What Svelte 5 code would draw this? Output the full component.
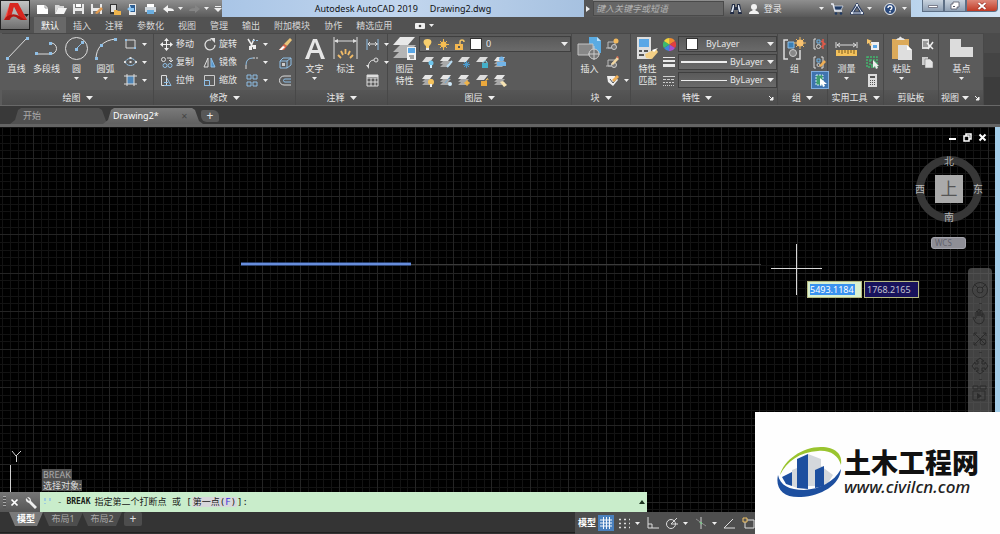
<script lang="ts">
  interface Tool {
    icon: string;
    label: string;
    caret?: boolean;
    on?: boolean;
  }

  type IconDef = [width: number, height: number, body: string];

  const BLUE = '#8fbfe6';

  // shared shapes: one sheet and a stack of sheets, used by all the layer tools
  const sheet = '<path d="M1 6 5 1h8L9 6z" fill="#dcdcdc"/>';
  const stack =
    '<path d="M1 11 4 8h8l-3 3zM1 8 4 5h8L9 8z" fill="#a9a9a9"/><path d="M1 5 4 1h8L9 5z" fill="#e6e6e6"/>';

  const icons: Record<string, IconDef> = {
    logo: [29, 29, '<path d="M3 19 9 2h3L8 19z" fill="#f0584c"/><path d="M9 2h8l9 17h-6L13 6 9 19H5z" fill="#d8261f"/><path d="M13 6l4 8h-6z" fill="#b5b5b5"/><path d="M5 16q7-5 13-1 4 3 8 4h-6q-3-1-5-3-4-2-7 3H3z" fill="#b01712"/><path d="M23 13h5l-2.500 3z" fill="#222"/>'],
    newFile: [13, 12, '<path d="M1 2h8l3 3v6H1z" fill="#fff"/><path d="M9 2v3h3" fill="none" stroke="#999"/>'],
    open: [13, 12, '<path d="M1 11V2h4l1 1h4v2H4z" fill="#d8d8d8"/><path d="M4 5h9l-3 6H1z" fill="#f5f5f5"/>'],
    save: [13, 12, '<path d="M1 1h11v10H1z" fill="#e8e8e8"/><path d="M3 1h7v4H3zM3 8h7v3H3z" fill="#777"/><path d="M4 1h5v3H4z" fill="#fff"/>'],
    saveAs: [13, 12, '<path d="M1 1h11v10H1z" fill="#e8e8e8"/><path d="M3 1h7v4H3zM3 8h7v3H3z" fill="#777"/><path d="m5 10 6-6 2 2-6 5z" fill="#e0994f"/>'],
    webOpen: [13, 12, '<path d="M2 1h7v10H2z" fill="#333"/><path d="M3 2h5v7H3z" fill="#ddd"/><path d="M6 7h3l1 1h3v4H6z" fill="#eeb44c"/>'],
    webSave: [13, 12, '<path d="M3 1h7v11H3z" fill="#e8e8e8"/><path d="M4 2h5v7H4z" fill="#2e5f94"/><path d="m1 6 4-3v2h3v3H5v1z" fill="#8cc7f5"/>'],
    plot: [13, 12, '<path d="M3 1h7v4H3z" fill="#fff"/><path d="M1 4h11v5H1z" fill="#cfd6dc"/><path d="M3 7h7v4H3z" fill="#6aaee0"/>'],
    undo: [13, 12, '<path d="m1 6 5-4v3c4 0 6 1 6 3H6v2z" fill="#f2f2f2"/>'],
    redo: [13, 12, '<path d="M12 6 7 2v3C3 5 1 6 1 8h6v2z" fill="#858585"/>'],
    caret: [7, 4, '<path d="M0 0h7L3.500 4z" fill="#eee"/>'],
    dot: [5, 3, '<path d="M0 0h5L2.500 3z" fill="#eee"/>'],
    customize: [8, 8, '<path d="M1 1h6v1H1zM0 3h8L4 7z" fill="#eee"/>'],
    next: [5, 8, '<path d="M0 1v6l4-3z" fill="#eee"/>'],
    find: [12, 12, '<path d="M2 1h3v3h2V1h3l2 10H8V7H4v4H0z" fill="#222c44"/><path d="M3 2h1v3L3 9H1zM8 2h1l2 7H9L8 5z" fill="#dce4f0"/>'],
    user: [12, 12, '<circle cx="6" cy="4" r="3" fill="#f2f2f2"/><path d="M1 11c0-3 3-3 4-4h2c1 1 4 1 4 4z" fill="#f2f2f2"/>'],
    cart: [14, 12, '<path d="M1 1h2l2 7h7" fill="none" stroke="#e8edf6" stroke-width="1.500"/><path d="M4 3h9l-2 4H5z" fill="#1f3a63" stroke="#dfe7f2" stroke-width=".7"/><circle cx="6" cy="10.500" r="1.300" fill="#1f3a63"/><circle cx="11" cy="10.500" r="1.300" fill="#1f3a63"/>'],
    a360: [14, 12, '<path d="m7 2 5 8H2z" fill="none" stroke="#2b3d63" stroke-width="3"/><path d="m7 2 5 8H2z" fill="none" stroke="#dfe7f2"/><path d="M6 1h2v2H6zM1 9h2v2H1zM11 9h2v2h-2z" fill="#dfe7f2"/>'],
    help: [12, 12, '<circle cx="6" cy="6" r="5.500" fill="#2b4a7d" stroke="#eee"/><path d="M4 5q0-2 2-2t2 1.500Q8 6 6 7" fill="none" stroke="#fff" stroke-width="1.300"/><path d="M5.300 8h1.400v1.400H5.300z" fill="#fff"/>'],
    winMin: [12, 8, '<path d="M1.500 3.500h9v2h-9z" fill="#fff" stroke="#556" stroke-width=".7"/>'],
    winMax: [12, 10, '<path d="M4 1h6v5H8v2H2V3h2z" fill="#fff" stroke="#556" stroke-width=".8"/><path d="M4 5h2v1H4z" fill="#556"/>'],
    winClose: [10, 8, '<path d="m1.500 1 7 6m0-6-7 6" stroke="#8a2016" stroke-width="3"/><path d="m1.500 1 7 6m0-6-7 6" stroke="#fff" stroke-width="2"/>'],
    ribbonMin: [10, 6, '<rect width="10" height="6" rx="1" fill="#f0f0f0"/><circle cx="5" cy="3" r="1.300" fill="#444"/>'],
    line: [24, 25, `<path d="M2 23 22 2" stroke="#ddd"/><path d="M1 21h3v3H1zM21 1h3v3h-3z" fill="${BLUE}"/>`],
    polyline: [26, 25, `<path d="M2 18h15a5.500 5.500 0 0 0 0-11" fill="none" stroke="#ddd"/><path d="M1 16h3v3H1zM15 16h3v3h-3zM15 6h3v3h-3z" fill="${BLUE}"/>`],
    circle: [25, 25, `<circle cx="12.500" cy="12.500" r="11" fill="none" stroke="#ddd"/><path d="m12 13 6-6" stroke="${BLUE}"/><path d="M11 12h3v3h-3zM17 5h3v3h-3z" fill="${BLUE}"/>`],
    arc: [24, 25, `<path d="M2 23C2 12 9 4 22 3" fill="none" stroke="#ddd"/><path d="M1 21h3v3H1zM6 8h3v3H6zM20 2h3v3h-3z" fill="${BLUE}"/>`],
    rect: [14, 12, `<path d="M2 2h9v8H2z" fill="none" stroke="#ddd"/><path d="M1 1h2v2H1zM10 9h2v2h-2z" fill="${BLUE}"/>`],
    ellipse: [14, 12, `<ellipse cx="6.500" cy="6" rx="5" ry="3.500" fill="none" stroke="${BLUE}"/><path d="M5.500 5h2v2h-2zM5.500 1h2v2h-2zM0 5h2v2H0zM11 5h2v2h-2z" fill="#ddd"/>`],
    hatch: [14, 12, `<path d="M3 2h7v8H3z" fill="#4f86b8"/><path d="M3 0v12M10 0v12M0 2h13M0 10h13" stroke="#ddd"/>`],
    move: [13, 13, '<path d="M6.500 0 9 3H7v3h3V4l3 2.500L10 9V7H7v3h2l-2.500 3L4 10h2V7H3v2L0 6.500 3 4v2h3V3H4z" fill="#f0f0f0"/>'],
    copy: [13, 13, `<circle cx="3.500" cy="3.500" r="2" fill="none" stroke="#ddd"/><path d="M7 2h4v3m-2-1 2 2 2-2" fill="none" stroke="#ddd"/><circle cx="5" cy="9.500" r="2" fill="none" stroke="${BLUE}"/><circle cx="10" cy="9.500" r="2" fill="none" stroke="${BLUE}"/>`],
    stretch: [13, 13, `<path d="M1.500 1.500h5v10h-5z" fill="none" stroke="#ddd"/><path d="M6.500 3.500 11 11.500H4M4 8.500h4" fill="none" stroke="${BLUE}"/>`],
    rotate: [13, 13, '<path d="M8 2a5 5 0 1 0 4 5" fill="none" stroke="#ddd" stroke-width="1.300"/><path d="M7 0h5v5z" fill="#ddd"/>'],
    mirror: [13, 13, '<path d="M5 2v9H1z" fill="none" stroke="#ddd"/><path d="M8 2v9h4z" fill="#5292c7" stroke="#8fbfe6"/>'],
    scale: [13, 13, `<path d="M1.500 1.500h10v10h-10z" fill="none" stroke="#ccc"/><path d="M1.500 6.500h5v5h-5z" fill="#5b5b5b" stroke="${BLUE}"/>`],
    trim: [14, 13, '<path d="m3 1 5 8M9 1 6 8" stroke="#eee" stroke-width="1.500"/><path d="M4 8h3v4H4zM8 7h3v4H8z" fill="#eee"/><path d="M8 2.500h5" stroke="#8fbfe6" stroke-dasharray="2 1"/>'],
    fillet: [14, 13, `<path d="M1 13V9" stroke="#ddd"/><path d="M1 9Q1 2 8 2" fill="none" stroke="${BLUE}"/><path d="M8 2h5" stroke="#ddd" stroke-dasharray="2 1"/>`],
    array: [14, 13, `<path d="M2 1h4v4H2zM8 1h4v4H8zM2 8h4v4H2zM8 8h4v4H8z" fill="none" stroke="${BLUE}"/>`],
    erase: [14, 13, '<path d="m12 0 2 2-5 6-3-2z" fill="#e9c478"/><path d="m6 6 3 2-3 4H1z" fill="#e26a4b"/><path d="m5 8 2 1-3 3H1z" fill="#fff"/>'],
    explode: [14, 13, `<path d="M2 5h7v7H2zM2 5l3-3h8v7l-4 3M9 5l4-3" fill="none" stroke="${BLUE}"/><path d="M4 7h3v3H4z" fill="#ccc"/>`],
    offset: [14, 13, `<path d="M13 2H6a4.500 4.500 0 0 0 0 9h7" fill="none" stroke="#ddd"/><path d="M13 5H7a1.500 1.500 0 0 0 0 3h6" fill="none" stroke="${BLUE}"/>`],
    text: [22, 25, '<path d="M1 23 9 3h4l8 20h-4l-2-6H7l-2 6zM8 14h6l-3-8z" fill="#e6e6e6"/>'],
    dim: [25, 25, '<path d="M1 1v22M24 1v22M2 5h21" stroke="#ddd"/><path d="M1 5l4-2v4zM24 5l-4-2v4z" fill="#ddd"/><path d="M12.500 13v5M8 15l2 4M17 15l-2 4M5 19l3 3M20 19l-3 3" stroke="#f0bb68" stroke-width="1.800"/>'],
    linear: [14, 13, `<path d="M1 1v11M12 1v11" stroke="${BLUE}"/><path d="M2 6h10M4 4 2 6l2 2M9 4l2 2-2 2" fill="none" stroke="#ddd"/>`],
    leader: [14, 13, '<path d="M2 11q1-7 6-7" fill="none" stroke="#ddd"/><circle cx="10" cy="4" r="2" fill="none" stroke="#ddd"/><path d="M0 9h3v4z" fill="#ddd"/>'],
    table: [14, 13, '<path d="M1 1h11v11H1zM1 4h11M1 8h11M5 4v8M9 4v8" fill="none" stroke="#ddd"/><path d="M1 1h11v2H1z" fill="#ddd"/>'],
    layers: [25, 25, '<path d="M1 22 8 15h16l-7 7zM1 16 8 9h16l-7 7z" fill="#b5b5b5"/><path d="M1 9 8 1h15l-7 8z" fill="#e8e8e8"/><path d="M15 11h9v13h-9z" fill="#f2f2f2"/><path d="M16 12h7v5h-7z" fill="#5aa7e6"/><path d="M17 20h5M18 22h4" stroke="#555"/>'],
    bulb: [11, 13, '<path d="M5.500 1C0 1 1 6 4 8v2h3V8c3-2 4-7-1.500-7z" fill="#f9cf6d"/><path d="M4 10h3v2H4z" fill="#eee"/>'],
    sun: [11, 13, '<path d="M5.500 1v11M0 6.500h11M2 3l7 7M9 3l-7 7" stroke="#f0b950"/><circle cx="5.500" cy="6.500" r="3" fill="#f5bd51"/>'],
    unlock: [12, 13, '<path d="M6 6V4q0-2 2-2t2 2" fill="none" stroke="#f0c264" stroke-width="1.500"/><path d="M1 6h8v6H1z" fill="#f3b750"/><path d="M4 8h2v2H4z" fill="#555"/>'],
    layOff: [14, 13, sheet + '<circle cx="10" cy="7" r="2.500" fill="#6ec5ec"/><path d="M9 9h2v3H9z" fill="#cfeefe"/>'],
    layIso: [14, 13, stack + '<path d="m8 11 5-6" stroke="#b8dbf1" stroke-width="2"/>'],
    layFrz: [14, 13, sheet + '<circle cx="9.500" cy="8.500" r="2" fill="#4a9bce"/><path d="M9.500 5v7M6 8.500h7M7 6l5 5M12 6l-5 5" stroke="#4a9bce"/>'],
    layLck: [14, 13, sheet + '<path d="M8 7V6q2-3 4 0v1" fill="none" stroke="#91d6e6"/><path d="M7 7h6v5H7z" fill="#43b0c9"/>'],
    layCur: [14, 13, stack + '<path d="M4 6h9v4H4z" fill="#72b4e8"/><circle cx="8.500" cy="3" r="2.500" fill="#72b4e8"/>'],
    layOn: [14, 13, stack + '<circle cx="10" cy="8" r="3" fill="#f5c25c"/><path d="M9 10h2v3H9z" fill="#eee"/>'],
    layUniso: [14, 13, stack + '<path d="m6 9 5-6" stroke="#76a9cf"/><circle cx="11" cy="10" r="2" fill="#cfe9fa"/>'],
    layThw: [14, 13, stack + '<circle cx="10" cy="9" r="2" fill="#f3b548"/><path d="M10 6v6M7 9h6" stroke="#f3b548"/>'],
    layUlk: [14, 13, sheet + '<path d="M11 7V6q2-3 2 0" fill="none" stroke="#f4c35f"/><path d="M6 7h6v5H6z" fill="#eba83c"/>'],
    layMch: [14, 13, stack + '<path d="m7 8 3-1 4 4-3 2z" fill="#f6e4b4"/>'],
    insert: [25, 25, '<path d="M12 1h8l4 4v12H12z" fill="#5aabe2"/><path d="M20 1v4h4" fill="#b8e0fb"/><path d="M1 8h15v11H1z" fill="#888" stroke="#c4c4c4"/><circle cx="17" cy="18" r="5" fill="#777" stroke="#ccc"/><path d="M17 10v14M11 18h12" stroke="#ccc"/>'],
    blkNew: [14, 13, '<path d="M2 4h7v6H2zM0 10h5" fill="none" stroke="#bbb"/><circle cx="8" cy="9" r="2.500" fill="#777" stroke="#ccc"/><circle cx="10" cy="3" r="2.500" fill="#f2b95d"/>'],
    blkEdit: [14, 13, '<path d="M2 4h7v6H2zM0 10h5" fill="none" stroke="#bbb"/><circle cx="8" cy="9" r="2.500" fill="#777" stroke="#ccc"/><path d="m5 8 6-7 2 2-6 6z" fill="#f0d6a2"/><path d="m10 1 2-1 1 3z" fill="#e27055"/>'],
    blkAttr: [14, 13, '<path d="M1 2h8l3 4-5 6-5-4z" fill="#eee"/><path d="m4 5 3 4 4-5" fill="none" stroke="#555"/><path d="m6 6 5-5 2 2-5 5z" fill="#efae54"/>'],
    match: [23, 25, '<path d="M1 1h14v22H1z" fill="#dedede"/><path d="M3 3h10v8H3z" fill="#5aa7e6"/><path d="M3 14h3v2H3zM8 14h4v2H8zM3 18h5v2H3z" fill="#555"/><path d="m20 13 2 3-6 7-6-1-1-4z" fill="#f3cf84"/><path d="m22 12-4 4-2-2 3-1z" fill="#fff"/>'],
    wheel: [13, 13, '<path d="M6.500 6.500V0A6.500 6.500 0 0 1 12 3z" fill="#f28a2e"/><path d="M6.500 6.500 12 3a6.500 6.500 0 0 1 0 7z" fill="#e33f3f"/><path d="m6.500 6.500 5.500 3.500a6.500 6.500 0 0 1-6 3z" fill="#a64fd0"/><path d="M6.500 6.500 6 13a6.500 6.500 0 0 1-5-3z" fill="#3e86dd"/><path d="M6.500 6.500 1 10a6.500 6.500 0 0 1 0-7z" fill="#3bb96d"/><path d="M6.500 6.500 1 3a6.500 6.500 0 0 1 5.500-3z" fill="#f4d43c"/>'],
    weights: [13, 13, '<path d="M0 1h12v1H0zM0 4h12v2H0zM0 8h12v3H0z" fill="#e8e8e8"/>'],
    types: [13, 13, '<path d="M0 2.500h12" stroke="#ccc"/><path d="M0 5.500h12" stroke="#ccc" stroke-dasharray="3 1"/><path d="M0 8.500h12" stroke="#ccc" stroke-dasharray="2 1"/><path d="M0 11.500h12" stroke="#ccc" stroke-dasharray="1 1"/>'],
    group: [23, 25, '<path d="M5 4H1v19h4M13 23h4V14" fill="none" stroke="#ddd" stroke-width="1.500"/><path d="M5 6h6v6H5z" fill="#3b7fb5" stroke="#8fbfe6"/><circle cx="10" cy="17" r="3.500" fill="#888" stroke="#ccc"/><path d="M17 1v12M11 7h12M13 3l8 8M21 3l-8 8" stroke="#f2b95d"/><circle cx="17" cy="7" r="3.500" fill="#f8c270"/>'],
    ungroup: [14, 13, '<path d="M3 1H1v10h2" fill="none" stroke="#ddd"/><path d="M4 2h3v3H4z" fill="none" stroke="#6db2e6"/><circle cx="5.500" cy="8.500" r="2" fill="none" stroke="#ccc"/><path d="m8 3 4 3-4 3M10 1v10" fill="none" stroke="#e05a4a" stroke-width="1.500"/>'],
    grpEdit: [14, 13, '<path d="M3 1H1v11h2M8 1h2v11H8" fill="none" stroke="#ddd"/><path d="M4 3h3v3H4z" fill="none" stroke="#6db2e6"/><circle cx="5.500" cy="9" r="1.500" fill="none" stroke="#ccc"/><path d="m6 10 5-6 2 2-5 5z" fill="#efae54"/>'],
    grpSel: [14, 13, '<path d="M3 1h7v10H3z" fill="#3f9d70" stroke="#cfe3f5" stroke-dasharray="2 1"/><path d="M7 4v8l2-2 1 3 2-1-1-2h3z" fill="#fff"/>'],
    measure: [23, 25, '<path d="M1 6v6M22 6v6M2 9h19M5 7 2 9l3 2M18 7l3 2-3 2" fill="none" stroke="#ddd"/><path d="M1 14h21v6H1z" fill="#f3c15b"/><path d="M4 14v3M7 14v4M10 14v3M13 14v4M16 14v3M19 14v4" stroke="#7b5a1c"/>'],
    quick: [14, 13, '<path d="M5 4h8v8H5z" fill="#eee"/><path d="M7 7h4v3H7z" fill="#5aa7e6"/><path d="m1 1 5 2-2 1 2 3-2 1-1-3-2 1z" fill="#f7c56b"/>'],
    selAll: [14, 13, '<path d="M1 1h10v10H1zM4 4h5v5H4z" fill="none" stroke="#43b86f" stroke-dasharray="2 1" stroke-width="1.500"/><path d="M7 4v8l2-2 1 3 2-1-1-2h2z" fill="#eee"/>'],
    calc: [14, 13, '<path d="M2 0h9v13H2z" fill="#ddd"/><path d="M4 2h5v2H4z" fill="#555"/><path d="M4 6.500h6M4 8.500h6M4 10.500h6" stroke="#555" stroke-dasharray="1 1"/>'],
    paste: [22, 25, '<path d="M1 3h17v20H1z" fill="#dcaa5a"/><path d="M5 4q1-2 3-2 1-3 3 0 2 0 3 2z" fill="#e8e8e8"/><path d="M7 9h9l5 5v10H7z" fill="#dedede"/><path d="M16 9v5h5z" fill="#fff"/>'],
    cut: [14, 13, '<path d="M1 1h7v10H1z" fill="#ddd"/><path d="M2 4h5M2 6h5M2 8h5" stroke="#555"/><path d="m6 5 6 6M12 4l-5 7" stroke="#eee" stroke-width="1.500"/>'],
    copyClip: [14, 13, '<path d="M1 1h6v8H1z" fill="#ccc"/><path d="M4 3h5l3 3v6H4z" fill="#e4e4e4" stroke="#666" stroke-width=".5"/>'],
    base: [25, 25, '<path d="M1 3h11v8h12v10H1z" fill="#dcdcdc"/>'],
    launch: [6, 6, '<path d="M1 1l3 3M5 2v3H2z" fill="#eee" stroke="#eee"/>'],
    vpMin: [9, 9, '<path d="M1 5h7v2H1z" fill="#fff"/>'],
    vpMax: [9, 9, '<path d="M1 3h5v5H1zM3 3V1h5v5H6" fill="none" stroke="#fff" stroke-width="1.500"/>'],
    vpClose: [9, 9, '<path d="m1.500 1.500 6 6m0-6-6 6" stroke="#fff" stroke-width="2"/>'],
    wrench: [13, 13, '<path d="M2 1 5 4 4 5 1 2q-1 4 3 5l6 6 2-2-6-6q0-4-4-4z" fill="#eee"/>'],
    cross: [9, 9, '<path d="m1.500 1.500 6 6m0-6-6 6" stroke="#fff" stroke-width="1.700"/>'],
    up: [6, 4, '<path d="M0 4h6L3 0z" fill="#1c331f"/>'],
    grid: [14, 14, '<path d="M4.500 1v12M7.500 1v12M10.500 1v12M1 4h12M1 7h12M1 10h12" stroke="#f2f6fb"/>'],
    snap: [12, 12, '<path d="M1 2.500h11M1 6.500h11M1 10.500h11" stroke="#ddd" stroke-width="1.500" stroke-dasharray="2 3"/>'],
    ortho: [13, 14, '<path d="M2 1v11h11M2 8h4v4" fill="none" stroke="#ddd"/>'],
    polar: [13, 14, '<circle cx="6" cy="8" r="4.500" fill="none" stroke="#ddd"/><path d="m6 8 6-6M6 8h7" stroke="#ddd"/>'],
    iso: [13, 14, '<path d="m2 3 10 7" stroke="#8d8d8d"/><path d="M7 1v12" stroke="#cfcfcf"/><path d="M5 6h3v3z" fill="#7fc18b"/>'],
    track: [13, 14, '<path d="m1 12 9-9M1 12h11" stroke="#ddd" fill="none"/>'],
    osnap: [13, 14, '<path d="M3 4h9v8H3z" fill="none" stroke="#ddd"/><path d="M1 2h4v4H1z" fill="#555" stroke="#f0c264"/>'],
    navWheel: [18, 18, '<circle cx="9" cy="9" r="7.500" fill="none" stroke="#2b2b2b"/><circle cx="9" cy="9" r="3" fill="none" stroke="#2b2b2b"/><path d="M3 3l4 4M15 3l-4 4" stroke="#2b2b2b"/>'],
    navPan: [18, 18, '<path d="M5 10V4q1-2 2 0v4-6q1-2 2 0v6-5q1-2 2 0v6-3q2-1 2 1v5q-1 4-5 4t-6-6q0-2 3 1" fill="none" stroke="#2b2b2b"/>'],
    navZoom: [18, 18, '<path d="m3 3 11 11M15 3 3 15M3 6V3h3M12 3h3v3M3 12v3h3" fill="none" stroke="#2b2b2b"/><circle cx="12" cy="12" r="3" fill="none" stroke="#2b2b2b"/>'],
    navOrbit: [18, 18, '<path d="M7 7V4H5l4-3 4 3h-2v3h3V5l3 4-3 4v-2h-3v3h2l-4 3-4-3h2v-3H4v2L1 9l3-4v2z" fill="none" stroke="#2b2b2b"/>'],
    navMotion: [18, 18, '<path d="M2 2h5v3H2zM9 2h6v3H9zM2 7h12v9H2z" fill="none" stroke="#2b2b2b"/><path d="m6 9 5 3-5 3z" fill="#2b2b2b"/>'],
    spark: [10, 10, '<path d="M2 1v3M7 1v3M2 6v1" stroke="#8fc2e6" stroke-width="1.500"/>'],
    civil: [68, 54, '<path d="M4 29C8 14 26 1 45 1c14 0 22 7 20 18C62 9 54 4 42 5 24 6 11 15 4 29z" fill="#9ac42f"/><path d="m32 8 13 5v27H32z" fill="#d4d8dc"/><path d="m45 20 12 9-5 8-7 3z" fill="#d4d8dc"/><path d="m16 24 5-2v20l-5-2z" fill="#d4d8dc"/><path d="m21 13 11-5v35l-11-1z" fill="#1d4f9f"/><path d="m39 24 9-4v20l-9 2z" fill="#1d4f9f"/><path d="m6 31 10-5v14l-6-2z" fill="#1d4f9f"/><path d="M2 29C-1 42 7 52 25 51 45 50 64 39 65 23 58 36 44 43 28 44 13 44 4 39 2 29z" fill="#1d4f9f"/>'],
  };

  const quickAccess: Tool[] = [
    { icon: 'newFile', label: '新建' },
    { icon: 'open', label: '打开' },
    { icon: 'save', label: '保存' },
    { icon: 'saveAs', label: '另存为' },
    { icon: 'webOpen', label: '从 Web 打开' },
    { icon: 'webSave', label: '保存到 Web' },
    { icon: 'plot', label: '打印' },
    { icon: 'undo', label: '放弃', caret: true },
    { icon: 'redo', label: '重做', caret: true },
  ];

  const menus = ['默认', '插入', '注释', '参数化', '视图', '管理', '输出', '附加模块', '协作', '精选应用'];
  let activeMenu = $state('默认');

  const draw: Tool[] = [
    { icon: 'line', label: '直线' },
    { icon: 'polyline', label: '多段线' },
    { icon: 'circle', label: '圆', caret: true },
    { icon: 'arc', label: '圆弧', caret: true },
  ];
  const drawSmall: Tool[] = [
    { icon: 'rect', label: '矩形', caret: true },
    { icon: 'ellipse', label: '椭圆', caret: true },
    { icon: 'hatch', label: '图案填充', caret: true },
  ];
  const modify: Tool[] = [
    { icon: 'move', label: '移动' },
    { icon: 'copy', label: '复制' },
    { icon: 'stretch', label: '拉伸' },
    { icon: 'rotate', label: '旋转' },
    { icon: 'mirror', label: '镜像' },
    { icon: 'scale', label: '缩放' },
  ];
  const modifySmall: Tool[] = [
    { icon: 'trim', label: '修剪', caret: true },
    { icon: 'fillet', label: '圆角', caret: true },
    { icon: 'array', label: '阵列', caret: true },
  ];
  const modifyMore: Tool[] = [
    { icon: 'erase', label: '删除' },
    { icon: 'explode', label: '分解' },
    { icon: 'offset', label: '偏移' },
  ];
  const annotateSmall: Tool[] = [
    { icon: 'linear', label: '线性', caret: true },
    { icon: 'leader', label: '引线', caret: true },
    { icon: 'table', label: '表格' },
  ];
  const layerTools: Tool[] = [
    { icon: 'layOff', label: '关' },
    { icon: 'layIso', label: '隔离' },
    { icon: 'layFrz', label: '冻结' },
    { icon: 'layLck', label: '锁定' },
    { icon: 'layCur', label: '置为当前' },
    { icon: 'layOn', label: '打开所有图层' },
    { icon: 'layUniso', label: '取消隔离' },
    { icon: 'layThw', label: '解冻所有图层' },
    { icon: 'layUlk', label: '解锁' },
    { icon: 'layMch', label: '匹配图层' },
  ];
  const blockSmall: Tool[] = [
    { icon: 'blkNew', label: '创建' },
    { icon: 'blkEdit', label: '编辑' },
    { icon: 'blkAttr', label: '编辑属性', caret: true },
  ];
  const groupSmall: Tool[] = [
    { icon: 'ungroup', label: '解除编组' },
    { icon: 'grpEdit', label: '组编辑' },
    { icon: 'grpSel', label: '启用/禁用组选择', on: true },
  ];
  const utilSmall: Tool[] = [
    { icon: 'quick', label: '快速选择' },
    { icon: 'selAll', label: '全部选择' },
    { icon: 'calc', label: '快速计算器' },
  ];
  const clipSmall: Tool[] = [
    { icon: 'cut', label: '剪切' },
    { icon: 'copyClip', label: '复制裁剪' },
  ];
  const status: Tool[] = [
    { icon: 'grid', label: '栅格', on: true },
    { icon: 'snap', label: '捕捉', caret: true },
    { icon: 'ortho', label: '正交' },
    { icon: 'polar', label: '极轴追踪', caret: true },
    { icon: 'iso', label: '等轴测草图', caret: true },
    { icon: 'track', label: '对象捕捉追踪' },
    { icon: 'osnap', label: '对象捕捉' },
  ];
  const navTools: Tool[] = [
    { icon: 'navWheel', label: '导航控制盘', caret: true },
    { icon: 'navPan', label: '平移' },
    { icon: 'navZoom', label: '范围缩放', caret: true },
    { icon: 'navOrbit', label: '动态观察', caret: true },
    { icon: 'navMotion', label: 'ShowMotion' },
  ];

  // 25 minor cells per tile, every fifth line is a major one
  const TILE = 191;
  const gridLines = Array.from({ length: 25 }, (_, i) => ({
    at: Math.round((i * TILE) / 25),
    major: i % 5 === 0,
  })).sort((a, b) => Number(a.major) - Number(b.major));
</script>

{#snippet icon(name: string)}
  {@const [w, h, body] = icons[name]}
  <svg class="icon" width={w} height={h} viewBox="0 0 {w} {h}" aria-hidden="true">{@html body}</svg>
{/snippet}

{#snippet big(tool: Tool)}
  <button class="big" type="button">
    {@render icon(tool.icon)}
    <span class="big-label">{tool.label}</span>
    {#if tool.caret}{@render icon('dot')}{/if}
  </button>
{/snippet}

{#snippet smallColumn(tools: Tool[])}
  <div class="small-column">
    {#each tools as tool (tool.icon)}
      <button class="small" class:on={tool.on} type="button" aria-label={tool.label}>
        {@render icon(tool.icon)}
        {#if tool.caret}{@render icon('dot')}{/if}
      </button>
    {/each}
  </div>
{/snippet}

{#snippet footer(title: string, caret = true, launcher = false)}
  <h2 class="panel-title">
    <span>{title}</span>
    {#if caret}{@render icon('caret')}{/if}
    {#if launcher}<span class="launcher">{@render icon('launch')}</span>{/if}
  </h2>
{/snippet}

<div class="window">
  <button class="app-button" type="button" aria-label="应用程序菜单">{@render icon('logo')}</button>

  <header class="title-bar">
    <div class="quick-access">
      {#each quickAccess as tool (tool.icon)}
        <button type="button" aria-label={tool.label}>
          {@render icon(tool.icon)}
          {#if tool.caret}{@render icon('dot')}{/if}
        </button>
      {/each}
      <button type="button" aria-label="自定义快速访问工具栏">{@render icon('customize')}</button>
    </div>
    <h1 class="title"><span>Autodesk AutoCAD 2019</span><span>Drawing2.dwg</span></h1>
    <div class="info-center">
      <button class="info-toggle" type="button" aria-label="展开">{@render icon('next')}</button>
      <input class="search" type="text" placeholder="键入关键字或短语" aria-label="搜索" />
      <button type="button" aria-label="查找">{@render icon('find')}</button>
      <button class="login" type="button">{@render icon('user')}登录</button>
      <span class="info-right">
        <button type="button" aria-label="登录选项">{@render icon('dot')}</button>
        <button type="button" aria-label="应用商店">{@render icon('cart')}</button>
        <button type="button" aria-label="保持连接">{@render icon('a360')}{@render icon('dot')}</button>
        <button class="help" type="button" aria-label="帮助">{@render icon('help')}</button>
        <button type="button" aria-label="帮助选项">{@render icon('dot')}</button>
      </span>
    </div>
    <div class="window-controls">
      <button type="button" aria-label="最小化">{@render icon('winMin')}</button>
      <button type="button" aria-label="还原">{@render icon('winMax')}</button>
      <button class="close" type="button" aria-label="关闭">{@render icon('winClose')}</button>
    </div>
  </header>

  <nav class="menu-tabs">
    {#each menus as menu (menu)}
      <button
        type="button"
        class:active={activeMenu === menu}
        onclick={() => (activeMenu = menu)}
      >
        {menu}
      </button>
    {/each}
    <button class="ribbon-min" type="button" aria-label="最小化功能区">
      {@render icon('ribbonMin')}{@render icon('dot')}
    </button>
  </nav>

  <div class="ribbon">
    <section class="panel">
      <div class="panel-body draw">
        {#each draw as tool (tool.icon)}{@render big(tool)}{/each}
        {@render smallColumn(drawSmall)}
      </div>
      {@render footer('绘图')}
    </section>

    <section class="panel">
      <div class="panel-body modify">
        <div class="labelled">
          {#each modify as tool (tool.icon)}
            <button type="button">{@render icon(tool.icon)}<span>{tool.label}</span></button>
          {/each}
        </div>
        {@render smallColumn(modifySmall)}
        {@render smallColumn(modifyMore)}
      </div>
      {@render footer('修改')}
    </section>

    <section class="panel">
      <div class="panel-body annotate">
        {@render big({ icon: 'text', label: '文字', caret: true })}
        {@render big({ icon: 'dim', label: '标注' })}
        {@render smallColumn(annotateSmall)}
      </div>
      {@render footer('注释')}
    </section>

    <section class="panel">
      <div class="panel-body layers">
        {@render big({ icon: 'layers', label: '图层 特性' })}
        <div class="layer-side">
          <label class="combo">
            {@render icon('bulb')}{@render icon('sun')}{@render icon('unlock')}
            <span class="swatch"></span>
            <select aria-label="图层"><option>0</option></select>
            {@render icon('caret')}
          </label>
          <div class="layer-tools">
            {#each layerTools as tool (tool.icon)}
              <button type="button" aria-label={tool.label}>{@render icon(tool.icon)}</button>
            {/each}
          </div>
        </div>
      </div>
      {@render footer('图层')}
    </section>

    <section class="panel">
      <div class="panel-body block">
        {@render big({ icon: 'insert', label: '插入' })}
        {@render smallColumn(blockSmall)}
      </div>
      {@render footer('块')}
    </section>

    <section class="panel">
      <div class="panel-body properties">
        {@render big({ icon: 'match', label: '特性 匹配' })}
        <div class="prop-rows">
          {@render icon('wheel')}
          <label class="combo color">
            <span class="swatch"></span>
            <select aria-label="对象颜色"><option>ByLayer</option></select>
            {@render icon('caret')}
          </label>
          {@render icon('weights')}
          <label class="combo">
            <span class="rule thick"></span>
            <select aria-label="线宽"><option>ByLayer</option></select>
            {@render icon('caret')}
          </label>
          {@render icon('types')}
          <label class="combo">
            <span class="rule"></span>
            <select aria-label="线型"><option>ByLayer</option></select>
            {@render icon('caret')}
          </label>
        </div>
      </div>
      {@render footer('特性', true, true)}
    </section>

    <section class="panel">
      <div class="panel-body group">
        {@render big({ icon: 'group', label: '组' })}
        {@render smallColumn(groupSmall)}
      </div>
      {@render footer('组')}
    </section>

    <section class="panel">
      <div class="panel-body utilities">
        {@render big({ icon: 'measure', label: '测量', caret: true })}
        {@render smallColumn(utilSmall)}
      </div>
      {@render footer('实用工具')}
    </section>

    <section class="panel">
      <div class="panel-body">
        {@render big({ icon: 'paste', label: '粘贴', caret: true })}
        {@render smallColumn(clipSmall)}
      </div>
      {@render footer('剪贴板', false)}
    </section>

    <section class="panel view">
      <div class="panel-body">
        {@render big({ icon: 'base', label: '基点', caret: true })}
      </div>
      {@render footer('视图', true, true)}
    </section>

    <div class="ribbon-end"></div>
  </div>

  <nav class="file-tabs">
    <button class="file-tab" type="button">开始</button>
    <button class="file-tab active" type="button">Drawing2*<span class="tab-close">✕</span></button>
    <button class="file-add" type="button" aria-label="新图形">+</button>
  </nav>

  <main class="canvas">
    <svg class="drawing" width="100%" height="100%" aria-hidden="true">
      <defs>
        <pattern id="grid" x="33" y="31" width={TILE} height={TILE} patternUnits="userSpaceOnUse">
          {#each gridLines as line (line.at)}
            <path
              d="M{line.at} 0h1v{TILE}h-1zM0 {line.at}h{TILE}v1H0z"
              fill={line.major ? '#242424' : '#131313'}
            />
          {/each}
        </pattern>
      </defs>
      <rect width="100%" height="100%" fill="url(#grid)" />
      <path d="M411 137.500h350" stroke="#3b3b3b" />
      <path d="M241 137h170" stroke="#4b74c8" stroke-width="3" />
      <path d="M241 137h170" stroke="#83a6f0" />
      <path d="M796.500 117v51M771 141.500h51" stroke="#d8d8d8" />
    </svg>

    <svg class="ucs" width="24" height="42" viewBox="0 0 24 42" aria-hidden="true">
      <path d="m12 1 4 5 5-5M16.500 6v6M10.500 15v27" fill="none" stroke="#d0d0d0" />
    </svg>

    <div class="dynamic-input">
      <label class="coord active"><input type="text" value="5493.1184" aria-label="X" /></label>
      <label class="coord"><input type="text" value="1768.2165" aria-label="Y" /></label>
    </div>

    <div class="viewport-controls">
      <button type="button" aria-label="最小化视口">{@render icon('vpMin')}</button>
      <button type="button" aria-label="还原视口">{@render icon('vpMax')}</button>
      <button type="button" aria-label="关闭视口">{@render icon('vpClose')}</button>
    </div>

    <div class="view-cube">
      <span class="north">北</span>
      <span class="west">西</span>
      <button class="face" type="button">上</button>
      <span class="east">东</span>
      <span class="south">南</span>
    </div>
    <button class="wcs" type="button">WCS</button>

    <div class="nav-bar">
      {#each navTools as tool (tool.icon)}
        <button type="button" aria-label={tool.label}>{@render icon(tool.icon)}</button>
        {#if tool.caret}<span class="nav-dot"></span>{/if}
      {/each}
    </div>

    <div class="command">
      <div class="history"><span>BREAK</span><span>选择对象:</span></div>
      <div class="command-line">
        <span class="grip"></span>
        <button type="button" aria-label="关闭命令行">{@render icon('cross')}</button>
        <button type="button" aria-label="自定义">{@render icon('wrench')}</button>
        <label class="prompt">
          {@render icon('spark')}<span class="dash">-</span>
          <b>BREAK</b>
          <span>指定第二个打断点 或 [<span class="option">第一点(<em>F</em>)</span>]:</span>
          <input type="text" aria-label="命令" />
          {@render icon('up')}
        </label>
      </div>
    </div>
  </main>

  <footer class="bottom-bar">
    <nav class="layout-tabs">
      <button class="active" type="button">模型</button>
      <button type="button">布局1</button>
      <button type="button">布局2</button>
      <button class="add" type="button" aria-label="新建布局">+</button>
    </nav>
    <div class="status-bar">
      <button class="space" type="button">模型</button>
      {#each status as tool (tool.icon)}
        <button class:on={tool.on} type="button" aria-label={tool.label}>
          {@render icon(tool.icon)}
          {#if tool.caret}{@render icon('dot')}{/if}
        </button>
      {/each}
    </div>
  </footer>

  <aside class="watermark">
    {@render icon('civil')}
    <div>
      <strong>土木工程网</strong>
      <a href="http://www.civilcn.com">www.civilcn.com</a>
    </div>
  </aside>
</div>

<style>
  :global(body) {
    margin: 0;
    background: #2f2f2f;
  }

  .window {
    position: relative;
    display: flex;
    flex-direction: column;
    min-height: 100vh;
    overflow: hidden;
    font-family: 'Noto Sans', 'Noto Sans CJK SC', sans-serif;
    font-size: 9px;
    line-height: 12px;
    color: #e8e8e8;
  }

  button,
  input,
  select {
    font: inherit;
    color: inherit;
    background: none;
    border: 0;
    padding: 0;
    margin: 0;
    min-width: 0;
  }

  button {
    display: flex;
    align-items: center;
    justify-content: center;
    white-space: nowrap;
  }

  .icon {
    display: block;
    flex: none;
  }

  /* title bar */

  .app-button {
    position: absolute;
    top: 0;
    left: 0;
    z-index: 1;
    width: 30px;
    height: 30px;
    border: 1px solid #222;
    background: linear-gradient(#c4c4c4, #6f6f6f);
  }

  .title-bar {
    display: grid;
    grid-template-columns: 222fr 362fr 327fr 89fr;
    height: 17px;
    background: #b4cce8;
  }

  .quick-access {
    display: flex;
    align-items: center;
    gap: 5px;
    padding-left: 36px;
    background: linear-gradient(#8f8f8f, #5a5a5a);
  }

  .quick-access button {
    gap: 3px;
  }

  .title {
    display: flex;
    align-items: center;
    justify-content: center;
    gap: 12px;
    margin: 0;
    font-size: 9px;
    font-weight: 400;
    color: #111;
    background: linear-gradient(90deg, #a9c5e6, #c2d6ee 50%, #a6c1e0);
  }

  .info-center {
    display: flex;
    align-items: center;
    gap: 6px;
    background: linear-gradient(#8f8f8f, #585858);
  }

  .info-toggle {
    width: 9px;
    height: 17px;
    background: #555;
  }

  .search {
    flex: none;
    width: 40%;
    height: 15px;
    margin-left: -6px;
    padding-left: 2px;
    box-sizing: border-box;
    background: #666;
    border: 1px solid #4a4a4a;
    font-style: italic;
  }

  .search::placeholder {
    color: #b5b5b5;
  }

  .login {
    gap: 4px;
  }

  .info-right {
    display: flex;
    gap: 6px;
    margin-left: auto;
    padding-right: 4px;
  }

  .info-right button {
    gap: 3px;
  }

  .info-right .help {
    padding-left: 6px;
  }

  .window-controls {
    display: flex;
    align-items: flex-start;
    padding: 0 2px 0 11px;
    background: linear-gradient(90deg, #b9d3ec, #d6e6f5);
  }

  .window-controls button {
    flex: 1;
    height: 12px;
    background: linear-gradient(#c9d3de, #8fa0b4);
    border: 1px solid #5d6f85;
    border-top: 0;
  }

  .window-controls .close {
    flex: 1.5;
    background: linear-gradient(#dd8677, #c13a25);
    border-radius: 0 0 4px 0;
  }

  /* ribbon */

  .menu-tabs {
    display: flex;
    height: 16px;
    padding-left: 34px;
    background: #525252;
  }

  .menu-tabs button {
    padding: 1px 7px 0;
    color: #d8d8d8;
  }

  .menu-tabs button.active {
    background: #686868;
    color: #fff;
  }

  .menu-tabs .ribbon-min {
    gap: 4px;
    padding-left: 16px;
  }

  .ribbon {
    display: grid;
    grid-template-columns: 152fr 142fr 92fr 184fr 59fr 147fr 50fr 56fr 55fr 45fr 16fr;
    height: 73px;
    padding-left: 2px;
    background: #5b5b5b;
    border-bottom: 1px solid #686868;
    box-sizing: border-box;
  }

  .panel {
    display: flex;
    flex-direction: column;
    justify-content: space-between;
    min-width: 0;
    border-right: 1px solid #484848;
    border-top: 1px solid #484848;
  }

  .panel-body {
    display: flex;
    padding: 1px 0 0 5px;
    gap: 5px;
  }

  .panel-body.draw {
    gap: 4px;
    padding-left: 2px;
  }

  .panel-body.modify,
  .panel-body.annotate {
    gap: 6px;
    padding-left: 6px;
  }

  .panel-body.layers {
    gap: 2px;
    padding-left: 4px;
  }

  .panel-body.utilities {
    padding-left: 6px;
  }

  .panel.view .panel-body {
    padding-left: 10px;
  }

  .panel-title {
    display: flex;
    align-items: center;
    justify-content: center;
    gap: 5px;
    height: 15px;
    margin: 0;
    font-size: 9px;
    font-weight: 400;
    white-space: nowrap;
    background: linear-gradient(#565656, #4c4c4c);
  }

  .launcher {
    margin-left: auto;
  }

  .panel-title:has(.launcher) {
    padding-right: 3px;
  }

  .panel-title:has(.launcher) > span:first-child {
    margin-left: auto;
  }

  .panel.view .panel-title {
    gap: 3px;
  }

  .big {
    flex-direction: column;
    justify-content: flex-start;
    gap: 2px;
    min-width: 25px;
    height: 54px;
    padding-top: 1px;
  }

  .big-label {
    width: min-content;
    min-width: 18px;
    word-break: keep-all;
    white-space: normal;
    text-align: center;
  }

  .small-column {
    display: grid;
    grid-template-rows: repeat(3, 18px);
    justify-items: start;
  }

  .small {
    gap: 4px;
    padding: 0 2px;
  }

  .small.on {
    background: #3f74ae;
    box-shadow: inset 0 0 0 1px #82aede;
  }

  .labelled {
    display: grid;
    grid-template-rows: repeat(3, 18px);
    grid-auto-flow: column;
    column-gap: 9px;
  }

  .labelled button {
    gap: 3px;
  }

  .layer-side {
    display: flex;
    flex-direction: column;
    flex: 1;
    padding-top: 1px;
  }

  .combo {
    display: flex;
    align-items: center;
    min-width: 0;
    height: 16px;
    padding: 0 2px;
    gap: 3px;
    box-sizing: border-box;
    background: linear-gradient(#5a5a5a, #6a6a6a);
    border: 1px solid #3f3f3f;
  }

  .layer-side .combo {
    gap: 5px;
  }

  .combo select {
    flex: 1;
    appearance: none;
  }

  .swatch {
    width: 10px;
    height: 10px;
    background: #fff;
    outline: 1px solid #333;
  }

  .layer-tools {
    display: grid;
    grid-template-columns: repeat(5, 14px);
    grid-auto-rows: 18px;
    column-gap: 4px;
    padding: 1px 0 0 2px;
  }

  .panel-body.block {
    gap: 2px;
  }

  .panel-body.properties {
    gap: 3px;
    padding-left: 4px;
  }

  .prop-rows {
    display: grid;
    flex: 1;
    grid-template-columns: 13px 1fr;
    grid-auto-rows: 18px;
    align-items: center;
    column-gap: 2px;
  }

  .combo.color .swatch {
    margin: 0 6px;
  }

  .rule {
    width: 46px;
    height: 1px;
    background: #eee;
  }

  .rule.thick {
    height: 2px;
  }

  .panel-body.group {
    gap: 4px;
    padding-left: 4px;
  }

  .ribbon-end {
    background: linear-gradient(#4b4b4b 0 20px, #444 20px 44px, #3c3c3c 44px);
  }

  /* drawing tabs */

  .file-tabs {
    display: flex;
    align-items: flex-end;
    height: 21px;
    padding-left: 10px;
    background: #393939;
    border-bottom: 3px solid #646464;
    box-sizing: border-box;
  }

  .file-tab {
    justify-content: flex-start;
    width: 100px;
    height: 16px;
    padding-left: 13px;
    margin-right: -7px;
    color: #aaa;
    background: #505050;
    clip-path: polygon(0 100%, 5px 12px, 8px 2px, 11px 0, 89px 0, 92px 2px, 96px 13px, 100% 100%);
  }

  .file-tab.active {
    padding-left: 10px;
    color: #fff;
    background: linear-gradient(#7a7a7a, #606060);
  }

  .tab-close {
    margin-left: auto;
    padding-right: 15px;
    font-size: 8px;
    color: #444;
  }

  .file-add {
    width: 18px;
    height: 12px;
    margin: 0 0 2px 5px;
    font-size: 12px;
    background: #575757;
    border-radius: 2px 6px 2px 6px;
  }

  /* drawing area */

  .canvas {
    position: relative;
    flex: 1;
    display: flex;
    flex-direction: column;
    justify-content: flex-end;
    min-height: 320px;
    background: #000;
    border-right: 5px solid #a5cfea;
  }

  .drawing {
    position: absolute;
    inset: 0;
  }

  .ucs {
    position: absolute;
    left: 0;
    bottom: 20px;
  }

  .dynamic-input {
    position: absolute;
    left: 807px;
    top: 154px;
    display: flex;
    gap: 2px;
  }

  .coord {
    width: 55px;
    height: 17px;
    padding: 2px;
    box-sizing: border-box;
    background: #18125c;
    border: 1px solid #b7bb83;
    color: #c3c3cf;
  }

  .coord input {
    display: block;
    width: 45px;
    height: 11px;
  }

  .coord.active {
    background: #d9f0cf;
    color: #fff;
  }

  .coord.active input {
    background: #3a92ef;
  }

  .viewport-controls {
    position: absolute;
    top: 6px;
    right: 8px;
    display: flex;
    gap: 6px;
  }

  .view-cube {
    position: absolute;
    top: 26px;
    right: 10px;
    display: grid;
    grid-template: 'n n n' 16px 'w f e' 40px 's s s' 16px / 14px 44px 14px;
    place-items: center;
    font-size: 10px;
    color: #b5b5b5;
  }

  .view-cube::before {
    content: '';
    grid-area: 1 / 1 / 4 / 4;
    width: 50px;
    height: 50px;
    border: 8px solid #373737;
    border-radius: 50%;
  }

  .view-cube > * {
    z-index: 1;
  }

  .north {
    grid-area: n;
  }

  .west {
    grid-area: w;
  }

  .east {
    grid-area: e;
  }

  .south {
    grid-area: s;
  }

  .face {
    grid-area: f;
    width: 28px;
    height: 28px;
    font-size: 17px;
    color: #555;
    background: #aaa;
  }

  .wcs {
    position: absolute;
    top: 110px;
    right: 29px;
    justify-content: flex-start;
    width: 35px;
    height: 12px;
    padding-left: 3px;
    font-size: 8px;
    color: #62626c;
    background: #8e8e96;
    border: 1px solid #a5a5ad;
    border-radius: 3px;
    box-sizing: border-box;
  }

  .nav-bar {
    position: absolute;
    top: 141px;
    right: 3px;
    display: flex;
    flex-direction: column;
    align-items: center;
    gap: 4px;
    width: 24px;
    min-height: 150px;
    padding-top: 13px;
    box-sizing: border-box;
    background: rgba(110, 110, 110, 0.6);
    border-radius: 4px 4px 0 0;
  }

  .nav-dot {
    width: 3px;
    height: 1px;
    background: #333;
  }

  /* command line */

  .command {
    position: relative;
    width: 65%;
  }

  .history {
    display: flex;
    flex-direction: column;
    align-items: flex-start;
    padding: 0 0 1px 42px;
  }

  .history span {
    line-height: 11px;
    padding: 0 1px;
    background: #505050;
    color: #ddd;
  }

  .history span:first-child {
    color: #aaa;
  }

  .command-line {
    display: flex;
    height: 20px;
    background: linear-gradient(#777, #555);
  }

  .command-line button {
    width: 17px;
  }

  .grip {
    width: 3px;
    margin: 4px 0 4px 3px;
    background: repeating-linear-gradient(#aaa 0 1px, #555 1px 3px);
  }

  .prompt {
    display: flex;
    flex: 1;
    align-items: center;
    gap: 4px;
    padding: 0 2px 0 3px;
    background: #c9edcb;
    color: #182018;
    font-family: 'DejaVu Sans Mono', 'Noto Sans CJK SC', monospace;
    white-space: nowrap;
  }

  .prompt b {
    font-size: 8px;
  }

  .prompt input {
    flex: 1;
  }

  .dash {
    color: #5a725c;
  }

  .option {
    padding: 0 1px;
    background: #d8d8dc;
  }

  .option em {
    font-style: normal;
    color: #3c34d8;
  }

  /* bottom */

  .bottom-bar {
    display: grid;
    grid-template-columns: 575fr 425fr;
    height: 22px;
    background: #343434;
  }

  .layout-tabs {
    display: flex;
    align-items: flex-start;
    padding-left: 9px;
    height: 20px;
    border-bottom: 1px solid #202020;
  }

  .layout-tabs button {
    width: 40px;
    height: 14px;
    margin-right: -1px;
    color: #aaa;
    background: #4d4d4d;
    clip-path: polygon(0 0, 100% 0, 34px 100%, 6px 100%);
  }

  .layout-tabs button.active {
    width: 34px;
    margin-right: 0;
    color: #fff;
    font-weight: 700;
    background: #7a7a7a;
    clip-path: polygon(0 0, 100% 0, 28px 100%, 6px 100%);
  }

  .layout-tabs .add {
    width: 18px;
    font-size: 12px;
    clip-path: none;
    color: #ddd;
    margin-left: 3px;
    border-radius: 2px;
  }

  .status-bar {
    display: flex;
    align-items: center;
    gap: 2px;
    padding-left: 3px;
    background: #4e4e4e;
  }

  .status-bar button {
    height: 16px;
    gap: 5px;
    padding: 0 2px;
  }

  .status-bar .space {
    padding: 0;
    color: #fff;
    font-weight: 700;
  }

  .status-bar .on {
    padding: 0 1px;
    background: #4a80bd;
  }

  .watermark {
    position: absolute;
    right: 0;
    bottom: 0;
    display: flex;
    align-items: center;
    width: 245px;
    height: 122px;
    padding-left: 21px;
    box-sizing: border-box;
    background: #fefefe;
    color: #111;
  }

  .watermark strong {
    display: block;
    font-size: 27px;
    line-height: 27px;
    font-weight: 900;
  }

  .watermark a {
    display: block;
    font-size: 17px;
    line-height: 22px;
    font-weight: 500;
    font-style: italic;
    color: #222;
    text-decoration: none;
  }
</style>
